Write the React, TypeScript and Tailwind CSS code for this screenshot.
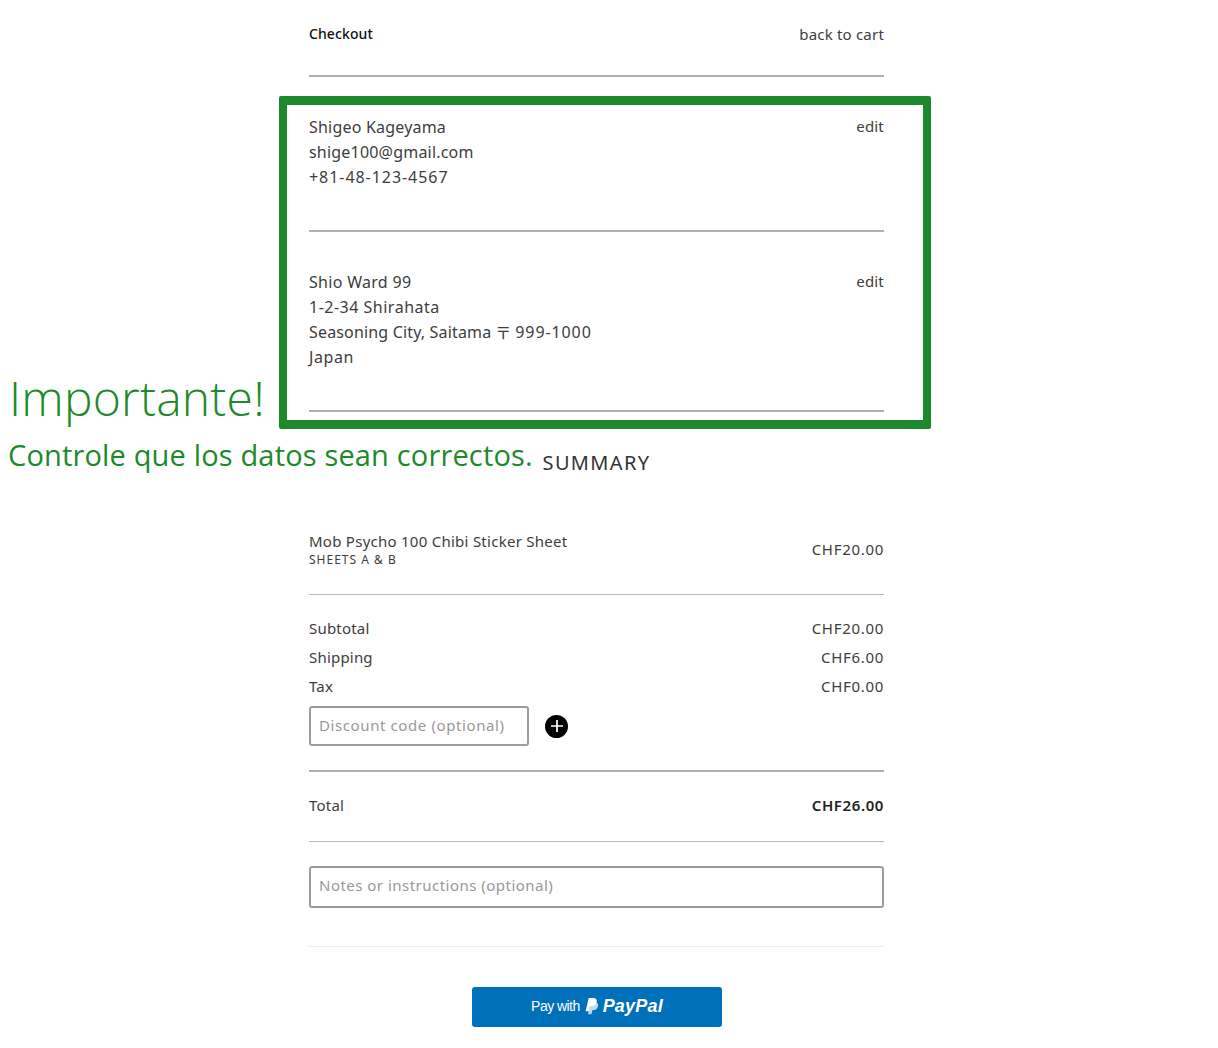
import React from 'react';

const font = { body: "font-['Noto_Sans',sans-serif]" };

const Divider = ({ className }: { className: string }) => <div className={`w-full ${className}`} />;

const SummaryRow = ({ label, value }: { label: string; value: string }) => (
  <div className="flex h-[29px] items-center justify-between">
    <span>{label}</span>
    <span className="tracking-[0.7px]">{value}</span>
  </div>
);

const PayPalMark = () => (
  <svg viewBox="0 0 24 28" className="h-[18px] w-[15px]" aria-hidden="true">
    <path fill="#ffffff" fillOpacity="0.75" d="M19.5 7.5c2.6 1.3 3.6 3.8 2.9 7-1 4.6-4 6.4-8 6.4h-1.2l-1.2 6.1H6.6l.6-3.4 4-16z" />
    <path fill="#ffffff" d="M7.5 1h7.2c4.3 0 6.4 2.2 5.6 6.3-.9 4.800-3.900 7-8.400 7H9.500L8 22.500H2.500z" />
  </svg>
);

export default function App() {
  return (
    <div className={`relative h-[1048px] w-full overflow-hidden bg-white text-[15px] tracking-[0.2px] text-[#3d3d3d] ${font.body}`}>
      <div className="ml-[309px] w-[575px]">
        {/* Header */}
        <div className="flex h-[75px] items-start justify-between pt-[24px] leading-5">
          <span className="text-[14px] font-medium tracking-[0.1px] text-[#111]">Checkout</span>
          <span>back to cart</span>
        </div>
        <Divider className="h-[2px] bg-[#b0b0b0]" />

        {/* Customer */}
        <div className="mt-[38px] flex items-start justify-between leading-[25px]">
          <div className="text-[16px] leading-[25px]">
            <div>Shigeo Kageyama</div>
            <div>shige100@gmail.com</div>
            <div className="tracking-[0.95px]">+81-48-123-4567</div>
          </div>
          <span className="leading-[23px]">edit</span>
        </div>
        <Divider className="mt-[40px] h-[2px] bg-[#b0b0b0]" />

        {/* Shipping */}
        <div className="mt-[38px] flex items-start justify-between leading-[25px]">
          <div className="text-[16px] leading-[25px]">
            <div className="tracking-[0.3px]">Shio Ward 99</div>
            <div className="tracking-[0.5px]">1-2-34 Shirahata</div>
            <div className="flex items-center tracking-[0.16px]">
              <span>Seasoning City, Saitama</span>
              <span className="mx-[4px] font-['Noto_Sans_CJK_JP',sans-serif] tracking-normal">〒</span>
              <span className="tracking-[0.9px]">999-1000</span>
            </div>
            <div className="tracking-[0.6px]">Japan</div>
          </div>
          <span className="leading-[23px]">edit</span>
        </div>
        <Divider className="mt-[40px] h-[2px] bg-[#b0b0b0]" />

        <h2 className="mt-[37px] text-center text-[20px] leading-7 font-normal tracking-[1.35px] text-[#333]">SUMMARY</h2>

        {/* Line item */}
        <div className="mt-[47px] flex h-[49px] items-center justify-between">
          <div className="pt-[1px]">
            <div className="leading-[22px] tracking-[0.26px]">Mob Psycho 100 Chibi Sticker Sheet</div>
            <div className="text-[12px] leading-[16px] tracking-[1px]">SHEETS A &amp; B</div>
          </div>
          <span className="pt-[2px] tracking-[0.7px]">CHF20.00</span>
        </div>
        <Divider className="mt-[21px] h-px bg-[#b8b8b8]" />

        <div className="mt-[19px]">
          <SummaryRow label="Subtotal" value="CHF20.00" />
          <SummaryRow label="Shipping" value="CHF6.00" />
          <SummaryRow label="Tax" value="CHF0.00" />
        </div>

        <div className="mt-[5px] flex items-center gap-[16px]">
          <div className="flex h-[40px] w-[220px] items-center rounded-[3px] border-2 border-[#9c9c9c] pb-[2px] pl-2 tracking-[0.6px] text-[#999]">
            Discount code (optional)
          </div>
          <span className="flex h-[23px] w-[23px] items-center justify-center rounded-full bg-black">
            <svg viewBox="0 0 24 24" className="h-[16px] w-[16px]" fill="none" stroke="#fff" strokeWidth="2.6" aria-hidden="true">
              <path d="M12 3v18M3 12h18" />
            </svg>
          </span>
        </div>
        <Divider className="mt-[24px] h-[2px] bg-[#b0b0b0]" />

        <div className="flex h-[69px] items-center justify-between pb-[2px]">
          <span>Total</span>
          <span className="font-semibold tracking-[0.6px] text-[#222]">CHF26.00</span>
        </div>
        <Divider className="h-px bg-[#b8b8b8]" />

        <div className="mt-[24px] flex h-[42px] items-center rounded-[3px] border-2 border-[#9c9c9c] pb-[3px] pl-2 tracking-[0.48px] text-[#999]">
          Notes or instructions (optional)
        </div>
        <Divider className="mt-[38px] h-px bg-[#ececec]" />

        <div className="mt-[40px] flex justify-center">
          <button className="flex h-[40px] w-[250px] items-center justify-center gap-[4px] rounded-[3px] bg-[#0070ba] pb-[2px] pl-[1px] text-white">
            <span className="font-['Liberation_Sans',sans-serif] text-[14px] tracking-[-0.55px]">Pay with</span>
            <PayPalMark />
            <span className="font-['Liberation_Sans',sans-serif] text-[18px] font-bold italic">PayPal</span>
          </button>
        </div>
      </div>

      {/* Annotation over the page */}
      <div className="absolute top-[96px] left-[279px] h-[333px] w-[652px] rounded-[2px] border-x-[8px] border-y-[9px] border-[#1c8a2b]" />
      <div className="absolute top-[363px] left-[9px] font-['Open_Sans',sans-serif] text-[48px] leading-[70px] font-[350] text-[#1c8a2b]">
        Importante!
      </div>
      <div className="absolute top-[434px] left-[8px] font-['Open_Sans',sans-serif] text-[29px] leading-[42px] font-normal tracking-[0.16px] text-[#1c8a2b]">
        Controle que los datos sean correctos.
      </div>
    </div>
  );
}
